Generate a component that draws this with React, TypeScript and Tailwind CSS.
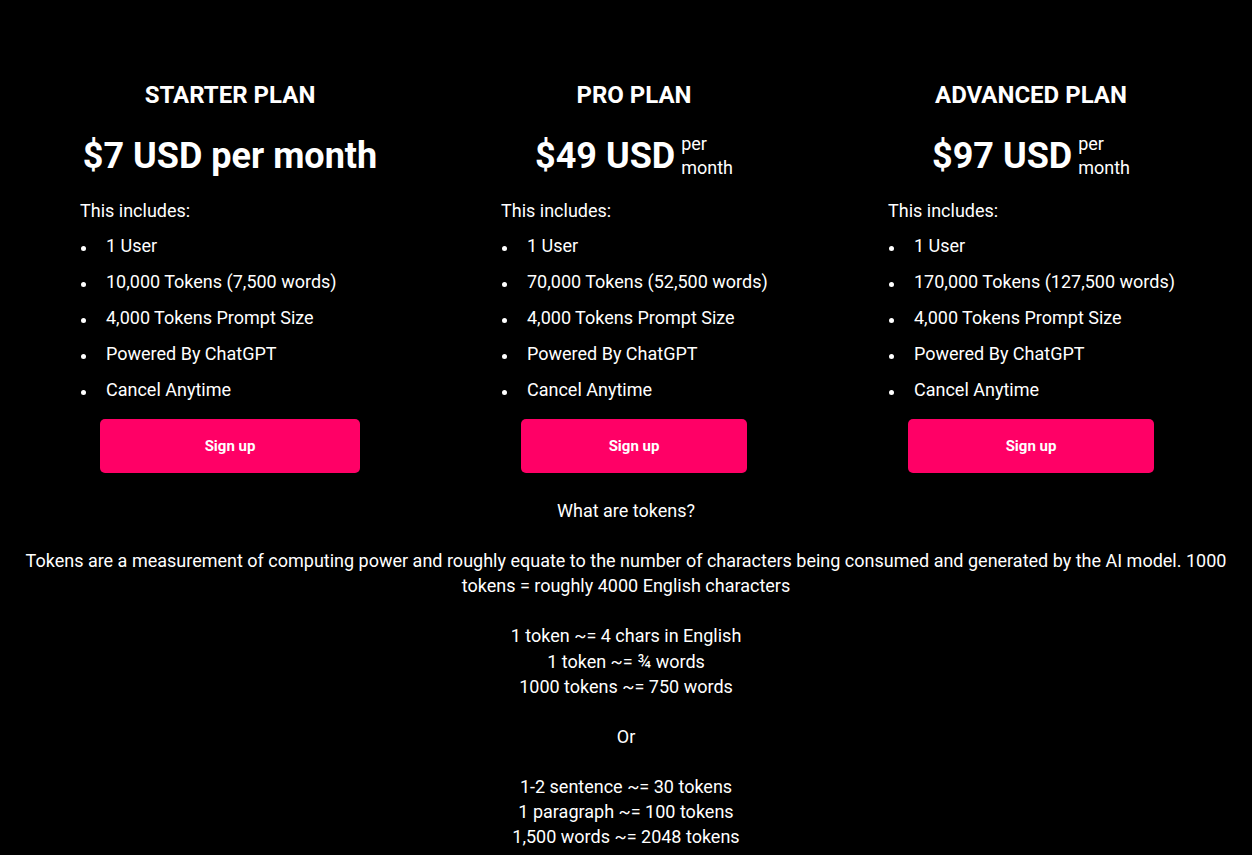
const plans = [
  {
    name: "STARTER PLAN",
    price: "$7 USD per month",
    inline: true,
    width: "w-[300px]",
    items: ["1 User", "10,000 Tokens (7,500 words)", "4,000 Tokens Prompt Size", "Powered By ChatGPT", "Cancel Anytime"],
  },
  {
    name: "PRO PLAN",
    price: "$49 USD",
    inline: false,
    width: "w-[266px]",
    items: ["1 User", "70,000 Tokens (52,500 words)", "4,000 Tokens Prompt Size", "Powered By ChatGPT", "Cancel Anytime"],
  },
  {
    name: "ADVANCED PLAN",
    price: "$97 USD",
    inline: false,
    width: "w-[286px]",
    items: ["1 User", "170,000 Tokens (127,500 words)", "4,000 Tokens Prompt Size", "Powered By ChatGPT", "Cancel Anytime"],
  },
];

function PlanCard({ plan }: { plan: (typeof plans)[number] }) {
  return (
    <div className={`flex flex-col ${plan.width}`}>
      <h2 className="text-center text-2xl leading-8 font-bold">{plan.name}</h2>
      <div className="mt-[21px] flex items-start justify-center">
        <span className="text-[36px] leading-[48px] font-bold whitespace-nowrap">{plan.price}</span>
        {!plan.inline && (
          <span className="ml-1.5 text-lg leading-6">
            per
            <br />
            month
          </span>
        )}
      </div>
      <p className="mt-[13px] text-lg leading-9">This includes:</p>
      <ul className="-mt-px text-lg leading-9">
        {plan.items.map((item) => (
          <li key={item} className="flex items-center">
            <span className="mt-1 mr-5 ml-px h-[5px] w-[5px] shrink-0 rounded-full bg-white" />
            <span className="whitespace-nowrap">{item}</span>
          </li>
        ))}
      </ul>
      <button
        type="button"
        className="mx-5 mt-[11px] h-[54px] rounded-[5px] bg-[#ff0066] text-[15px] font-bold text-white"
      >
        Sign up
      </button>
    </div>
  );
}

export default function App() {
  return (
    <div className="min-h-screen bg-black pt-[79px] pb-10 text-white font-['Roboto',sans-serif]">
      <div className="flex justify-center gap-[121px] pl-[2px]">
        {plans.map((p) => (
          <PlanCard key={p.name} plan={p} />
        ))}
      </div>

      <div className="mt-[25px] px-4 text-center text-lg leading-[25.1px]">
        <p>What are tokens?</p>
        <br />
        <p>
          Tokens are a measurement of computing power and roughly equate to the number of characters being
          consumed and generated by the AI model. 1000 tokens = roughly 4000 English characters
        </p>
        <br />
        <p>
          1 token ~= 4 chars in English
          <br />1 token ~= ¾ words
          <br />
          1000 tokens ~= 750 words
        </p>
        <br />
        <p>Or</p>
        <br />
        <p>
          1-2 sentence ~= 30 tokens
          <br />1 paragraph ~= 100 tokens
          <br />
          1,500 words ~= 2048 tokens
        </p>
      </div>
    </div>
  );
}
